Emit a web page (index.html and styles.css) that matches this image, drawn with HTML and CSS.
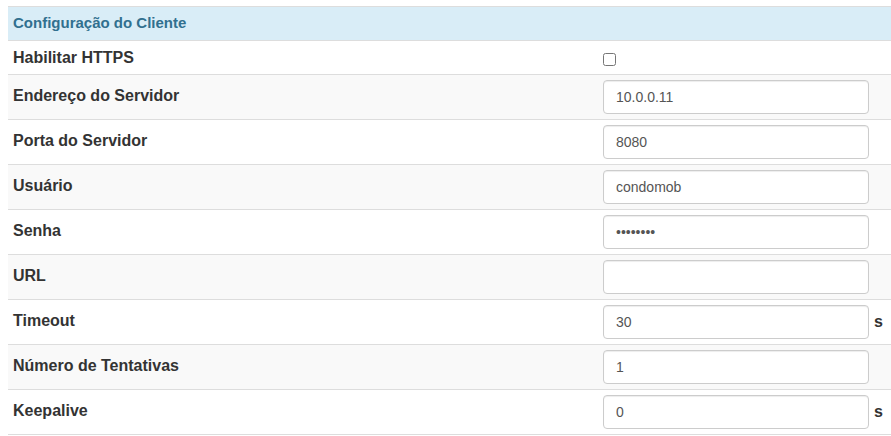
FILE: index.html
```html
<!DOCTYPE html>
<html lang="pt-BR">
<head>
<meta charset="utf-8">
<title>Configuração do Cliente</title>
<link rel="stylesheet" href="styles.css">
</head>
<body>
<table class="config">
  <thead>
    <tr><th colspan="2" class="title">Configuração do Cliente</th></tr>
  </thead>
  <tbody>
    <tr class="row-check">
      <td class="label">Habilitar HTTPS</td>
      <td class="field"><input type="checkbox" class="check"></td>
    </tr>
    <tr class="striped">
      <td class="label">Endereço do Servidor</td>
      <td class="field"><div class="field-wrap"><input class="input" type="text" value="10.0.0.11"></div></td>
    </tr>
    <tr>
      <td class="label">Porta do Servidor</td>
      <td class="field"><div class="field-wrap"><input class="input" type="text" value="8080"></div></td>
    </tr>
    <tr class="striped">
      <td class="label">Usuário</td>
      <td class="field"><div class="field-wrap"><input class="input" type="text" value="condomob"></div></td>
    </tr>
    <tr>
      <td class="label">Senha</td>
      <td class="field"><div class="field-wrap"><input class="input" type="password" value="12345678"></div></td>
    </tr>
    <tr class="striped">
      <td class="label">URL</td>
      <td class="field"><div class="field-wrap"><input class="input" type="text" value=""></div></td>
    </tr>
    <tr>
      <td class="label">Timeout</td>
      <td class="field"><div class="field-wrap"><input class="input" type="text" value="30"><span class="unit">s</span></div></td>
    </tr>
    <tr class="striped">
      <td class="label">Número de Tentativas</td>
      <td class="field"><div class="field-wrap"><input class="input" type="text" value="1"></div></td>
    </tr>
    <tr>
      <td class="label">Keepalive</td>
      <td class="field"><div class="field-wrap"><input class="input" type="text" value="0"><span class="unit">s</span></div></td>
    </tr>
  </tbody>
</table>
</body>
</html>
```
FILE: styles.css
```css
html, body {
  background: #fff;
}
body {
  margin: 6px 0 0 8px;
  font-family: "Liberation Sans", Arial, Helvetica, sans-serif;
  font-size: 14px;
  color: #333;
}
.config {
  width: 883px;
  border-collapse: collapse;
  border-spacing: 0;
  border-bottom: 1px solid #ddd;
}
.config th,
.config td {
  border-top: 1px solid #ddd;
  padding: 0;
  vertical-align: top;
  text-align: left;
}
.title {
  background: #d9edf7;
  color: #31708f;
  font-size: 15px;
  font-weight: bold;
  line-height: 23px;
  padding: 4px 5px 6px !important;
}
.label {
  width: 580px;
  font-size: 16px;
  font-weight: bold;
  line-height: 20px;
  padding: 11px 5px 3px !important;
  color: #333;
}
.row-check .label {
  padding: 7px 5px 6px !important;
}
.field {
  padding: 5px !important;
}
.row-check .field {
  padding: 12px 5px 8px !important;
}
.striped td {
  background: #f9f9f9;
}
.check {
  display: block;
  width: 13px;
  height: 13px;
  margin: 0;
}
.field-wrap {
  display: flex;
  align-items: baseline;
  gap: 5px;
}
.input {
  box-sizing: border-box;
  width: 266px;
  height: 34px;
  margin: 0;
  padding: 6px 12px;
  font-family: "Liberation Sans", Arial, Helvetica, sans-serif;
  font-size: 14px;
  line-height: 20px;
  color: #555;
  background: #fff;
  border: 1px solid #ccc;
  border-radius: 4px;
  box-shadow: inset 0 1px 1px rgba(0, 0, 0, 0.075);
  outline: none;
}
.unit {
  font-size: 16px;
  font-weight: bold;
  color: #333;
}
```
